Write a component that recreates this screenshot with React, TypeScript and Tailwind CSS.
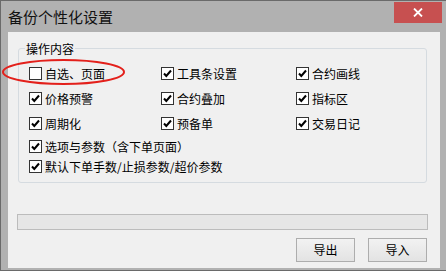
import React from 'react';

const font = { fontFamily: '"Noto Sans CJK SC", "Liberation Sans", sans-serif' };

interface CheckProps {
  label: string;
  checked?: boolean;
}

const Check: React.FC<CheckProps> = ({ label, checked = true }) => (
  <div className="flex items-center gap-[3px] h-[13px]">
    <div className="w-[13px] h-[13px] border border-[#333333] bg-white flex items-center justify-center shrink-0">
      {checked && (
        <svg width="11" height="11" viewBox="0 0 11 11">
          <polyline points="2,5.5 4.3,8 9,2.5" fill="none" stroke="#000" strokeWidth="2" />
        </svg>
      )}
    </div>
    <span className="text-[12px] leading-[13px] text-black whitespace-nowrap">{label}</span>
  </div>
);

const rows: { h: string; items: CheckProps[] }[] = [
  { h: 'h-[25px]', items: [{ label: '自选、页面', checked: false }, { label: '工具条设置' }, { label: '合约画线' }] },
  { h: 'h-[25px]', items: [{ label: '价格预警' }, { label: '合约叠加' }, { label: '指标区' }] },
  { h: 'h-[23px]', items: [{ label: '周期化' }, { label: '预备单' }, { label: '交易日记' }] },
];

export default function App() {
  return (
    <div
      className="relative w-[446px] h-[271px] bg-[#b1b1b1] border-t border-l border-b border-[#6a6a6a] flex flex-col overflow-hidden"
      style={font}
    >
      {/* title bar */}
      <div className="h-[31px] flex items-start justify-between shrink-0">
        <div className="pl-[7px] pt-[6px] text-[15px] leading-[20px] text-[#111111]">备份个性化设置</div>
        <div className="mt-[1px] mr-[4px] w-[48px] h-[21px] bg-[#c75050] flex items-center justify-center">
          <svg width="10" height="9" viewBox="0 0 10 9">
            <path d="M1 0.5 L9 8.5 M9 0.5 L1 8.5" stroke="#fff" strokeWidth="1.8" />
          </svg>
        </div>
      </div>

      {/* client area */}
      <div className="ml-[7px] w-[432px] h-[236px] bg-[#f0f0f0] flex flex-col">
        <div className="relative mt-[16px] ml-[10px] w-[409px] h-[135px] border border-[#d5dbe0] rounded-[3px] flex flex-col pt-[18px] pl-[10px]">
          <span className="absolute left-[6px] top-[-6px] px-[1px] bg-[#f0f0f0] text-[12px] leading-[12px] text-black">
            操作内容
          </span>
          {rows.map((r, i) => (
            <div key={i} className={`${r.h} grid grid-cols-[132px_135px_1fr] items-start`}>
              {r.items.map((it) => (
                <Check key={it.label} {...it} />
              ))}
            </div>
          ))}
          <div className="h-[20px]">
            <Check label="选项与参数（含下单页面）" />
          </div>
          <Check label="默认下单手数/止损参数/超价参数" />
        </div>

        <div className="mt-[31px] ml-[9px] w-[411px] h-[16px] border border-[#bcbcbc] bg-[#e6e6e6]" />

        <div className="mt-[8px] flex justify-end gap-[13px] pr-[13px]">
          <button className="w-[59px] h-[24px] border border-[#adadad] bg-gradient-to-b from-[#f2f2f2] to-[#e3e3e3] text-[12px] text-black">
            导出
          </button>
          <button className="w-[59px] h-[24px] border border-[#adadad] bg-gradient-to-b from-[#f2f2f2] to-[#e3e3e3] text-[12px] text-black">
            导入
          </button>
        </div>
      </div>

      {/* red annotation ellipse */}
      <svg className="absolute left-0 top-0 pointer-events-none" width="446" height="271">
        <ellipse cx="62.5" cy="71" rx="60.5" ry="12" fill="none" stroke="#e3201b" strokeWidth="2" />
      </svg>
    </div>
  );
}
